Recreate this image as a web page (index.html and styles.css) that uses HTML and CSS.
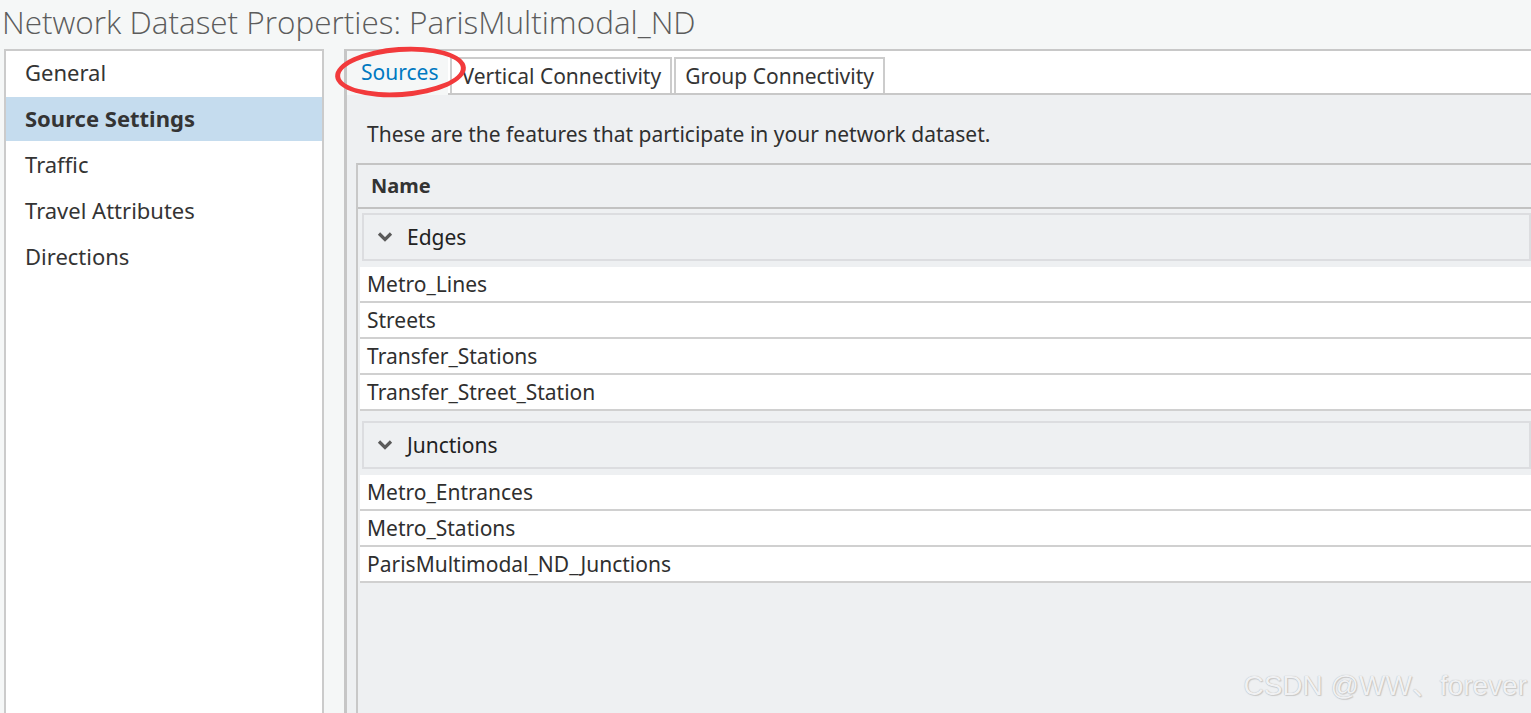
FILE: index.html
```html
<!DOCTYPE html>
<html lang="en">
<head>
  <meta charset="UTF-8">
  <meta name="viewport" content="width=device-width, initial-scale=1.0">
  <title>Network Dataset Properties</title>
  <link rel="stylesheet" href="styles.css">
</head>
<body>
  <h1 class="title">Network Dataset Properties: ParisMultimodal_ND</h1>

  <div class="dialog">
    <!-- Property pages -->
    <ul class="pages">
      <li>General</li>
      <li class="active">Source Settings</li>
      <li>Traffic</li>
      <li>Travel Attributes</li>
      <li>Directions</li>
    </ul>

    <!-- Source settings page -->
    <div class="panel">
      <div class="tabs">
        <div class="tab selected">Sources</div>
        <div class="tab">Vertical Connectivity</div>
        <div class="tab">Group Connectivity</div>
      </div>

      <div class="tab-body">
        <p class="intro">These are the features that participate in your network dataset.</p>

        <div class="sources">
          <div class="sources-head">Name</div>

          <div class="group">
            <div class="group-head">
              <svg class="chevron" width="16" height="10" viewBox="0 0 16 10"><path d="M2 1.5 L8 7.5 L14 1.5" fill="none" stroke="#5a5a5a" stroke-width="3.2"/></svg>
              <span>Edges</span>
            </div>
            <div class="row">Metro_Lines</div>
            <div class="row">Streets</div>
            <div class="row">Transfer_Stations</div>
            <div class="row">Transfer_Street_Station</div>
          </div>

          <div class="group">
            <div class="group-head">
              <svg class="chevron" width="16" height="10" viewBox="0 0 16 10"><path d="M2 1.5 L8 7.5 L14 1.5" fill="none" stroke="#5a5a5a" stroke-width="3.2"/></svg>
              <span>Junctions</span>
            </div>
            <div class="row">Metro_Entrances</div>
            <div class="row">Metro_Stations</div>
            <div class="row">ParisMultimodal_ND_Junctions</div>
          </div>
        </div>
      </div>
    </div>
  </div>

  <!-- red marker drawn over the Sources tab -->
  <div class="annotation"></div>

  <div class="watermark">CSDN @WW、forever</div>
</body>
</html>
```

FILE: styles.css
```css
* {
  box-sizing: border-box;
}

html, body {
  margin: 0;
  height: 100%;
}

body {
  position: relative;
  display: flex;
  flex-direction: column;
  height: 100vh;
  overflow: hidden;
  background-color: #f5f7f7;
  font-family: "Noto Sans", Arial, sans-serif;
  font-size: 21px;
  color: #343434;
}

.title {
  flex-shrink: 0;
  margin: 0;
  height: 49px;
  padding-left: 2px;
  font-family: "Open Sans", "Noto Sans", sans-serif;
  font-weight: 300;
  font-size: 31.5px;
  line-height: 44px;
  color: #5c5c5c;
  white-space: nowrap;
}

.dialog {
  flex: 1;
  display: flex;
  min-height: 0;
}

/* left list */
.pages {
  flex-shrink: 0;
  display: flex;
  flex-direction: column;
  gap: 2px;
  width: 320px;
  margin: 0 20px 0 4px;
  padding: 0;
  list-style: none;
  background-color: #fff;
  border: 2px solid #cbcbcb;
  border-bottom: none;
}

.pages li {
  height: 44px;
  padding-left: 19px;
  font-size: 22px;
  line-height: 43px;
}

.pages li.active {
  background-color: #c5dcee;
  font-weight: 700;
}

/* right panel */
.panel {
  flex: 1;
  display: flex;
  flex-direction: column;
  min-width: 0;
  border-top: 2px solid #c8c8c8;
  border-left: 3px solid #c6c6c6;
}

.tabs {
  flex-shrink: 0;
  display: flex;
  align-items: flex-end;
  height: 44px;
  background-color: #fff;
  border-bottom: 2px solid #c8c8c8;
}

.tab {
  height: 36px;
  margin-right: 2px;
  padding: 0 9px;
  border: 2px solid #cccccc;
  border-bottom: none;
  background-color: #fff;
  line-height: 34px;
  white-space: nowrap;
}

.tab.selected {
  height: 44px;
  margin-bottom: -2px;
  padding: 0 10px 0 14px;
  border: none;
  background-color: #f5f7f7;
  color: #0079c1;
  line-height: 42px;
}

.tab-body {
  flex: 1;
  display: flex;
  flex-direction: column;
  min-height: 0;
  padding-left: 9px;
  background-color: #eef0f2;
}

.intro {
  margin: 25px 0 15px 11px;
  line-height: 28px;
  color: #2f2f2f;
  white-space: nowrap;
}

.sources {
  flex: 1;
  border-top: 2px solid #c4c4c4;
  border-left: 2px solid #c8c8c8;
}

.sources-head {
  height: 44px;
  padding-left: 13px;
  border-bottom: 2px solid #c2c2c2;
  font-size: 20px;
  line-height: 42px;
  font-weight: 700;
  color: #333;
}

.group {
  padding-top: 4px;
}

.group + .group {
  padding-top: 10px;
}

.group-head {
  display: flex;
  align-items: center;
  gap: 14px;
  height: 48px;
  margin: 0 0 6px 4px;
  padding-left: 13px;
  border: 2px solid #dcdde0;
  color: #222;
}

.chevron {
  display: block;
}

.row {
  height: 36px;
  margin-left: 2px;
  padding-left: 7px;
  border-bottom: 2px solid #d0d0d0;
  background-color: #fff;
  line-height: 34px;
  color: #2f2f2f;
}

/* overlays */
.annotation {
  position: absolute;
  left: 335px;
  top: 47px;
  width: 131px;
  height: 50px;
  border: 5px solid #f23a3c;
  border-radius: 50%;
  transform: rotate(-4deg);
  pointer-events: none;
}

.watermark {
  position: absolute;
  right: 4px;
  bottom: 11px;
  font-family: "Liberation Sans", "Noto Sans CJK SC", sans-serif;
  font-size: 28px;
  line-height: 32px;
  color: #f0f1f3;
  text-shadow: 0 0 1px #a8a8a8, 1px 1px 1px #cccccc;
  white-space: nowrap;
}
```
